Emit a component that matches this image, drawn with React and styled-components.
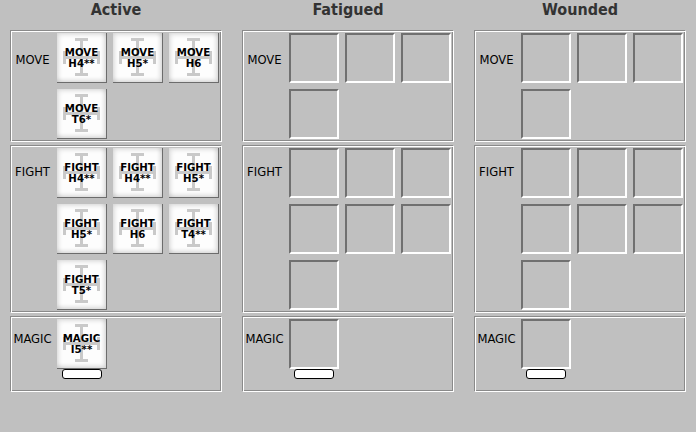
import React from "react";
import styled, { createGlobalStyle } from "styled-components";

const Global = createGlobalStyle`
  html, body { margin: 0; padding: 0; background: #c0c0c0; }
  body { width: 696px; height: 432px; overflow: hidden; font-family: "DejaVu Sans", "Liberation Sans", sans-serif; }
`;

const Board = styled.div`
  display: grid;
  grid-template-columns: repeat(3, 212px);
  column-gap: 20px;
  padding-left: 10px;
  height: 432px;
  box-sizing: border-box;
  background: #c0c0c0;
`;

const Column = styled.div`
  display: flex;
  flex-direction: column;
  gap: 3px;
`;

const Title = styled.div`
  height: 30px;
  margin-bottom: -3px;
  box-sizing: border-box;
  padding-top: 1px;
  text-align: center;
  font-family: "DejaVu Sans Condensed", "DejaVu Sans", sans-serif;
  font-stretch: condensed;
  font-weight: bold;
  font-size: 16px;
  line-height: 18px;
  color: #333333;
`;

const Panel = styled.div`
  display: grid;
  grid-template-columns: 41px 162px;
  column-gap: 4px;
  align-items: start;
  padding: 2px 2px 2px 1px;
  border-top: 1px solid #8a8a8a;
  border-left: 1px solid #8a8a8a;
  border-right: 1px solid #ffffff;
  border-bottom: 1px solid #ffffff;
  box-shadow: inset 1px 1px 0 #ffffff, inset -1px -1px 0 #8a8a8a;
`;

const Label = styled.div`
  height: 50px;
  display: flex;
  align-items: center;
  justify-content: center;
  font-size: 11.6px;
  color: #000;
  white-space: nowrap;
  transform: translateY(${(p) => p.$dy || 0}px);
`;

const Slots = styled.div`
  display: grid;
  grid-template-columns: repeat(3, 50px);
  grid-auto-rows: 50px;
  gap: 6px;
`;

const Card = styled.div`
  position: relative;
  width: 50px;
  height: 50px;
  box-sizing: border-box;
  background: #fdfdfd;
  border-right: 1px solid #6c6c6c;
  border-bottom: 1px solid #6c6c6c;
  box-shadow: inset 2px 2px 4px rgba(0, 0, 0, 0.12), inset -2px -2px 4px rgba(0, 0, 0, 0.14);
  display: flex;
  flex-direction: column;
  align-items: center;
  justify-content: center;
  font-weight: bold;
  font-size: 10.2px;
  line-height: 11px;
  color: #000;
  text-align: center;
`;

const CardText = styled.span`
  position: relative;
  display: block;
`;

const Cross = styled.svg`
  position: absolute;
  left: 0;
  top: 0;
`;

const Empty = styled.div`
  width: 50px;
  height: 50px;
  box-sizing: border-box;
  border-style: solid;
  border-width: 2px;
  border-color: #707070 #ffffff #ffffff #707070;
`;

const MagicCell = styled.div`
  display: flex;
  flex-direction: column;
  align-items: center;
  width: 50px;
  padding-bottom: 10px;
`;

const Pill = styled.div`
  width: 40px;
  height: 10px;
  box-sizing: border-box;
  border: 1px solid #000;
  border-radius: 3px;
  background: #fff;
`;

function CrossIcon() {
  return (
    <Cross width="49" height="49" viewBox="0 0 49 49">
      <g fill="#c9c9c9">
        <rect x="18" y="5" width="13" height="3" />
        <rect x="23" y="5" width="3" height="38" />
        <rect x="18" y="40" width="13" height="3" />
        <rect x="7" y="23" width="35" height="3" />
        <rect x="6" y="18" width="3" height="13" />
        <rect x="40" y="18" width="3" height="13" />
      </g>
    </Cross>
  );
}

function Tile({ kind, code }) {
  return (
    <Card>
      <CrossIcon />
      <CardText>{kind}</CardText>
      <CardText>{code}</CardText>
    </Card>
  );
}

const active = {
  MOVE: ["H4**", "H5*", "H6", "T6*"],
  FIGHT: ["H4**", "H4**", "H5*", "H5*", "H6", "T4**", "T5*"],
  MAGIC: ["I5**"],
};

const counts = { MOVE: 4, FIGHT: 7, MAGIC: 1 };
const dys = { MOVE: 2, FIGHT: -1, MAGIC: -5 };

function Section({ kind, filled }) {
  const n = counts[kind];
  const items = Array.from({ length: n }, (_, i) =>
    filled ? <Tile key={i} kind={kind} code={active[kind][i]} /> : <Empty key={i} />
  );
  return (
    <Panel>
      <Label $dy={dys[kind]}>{kind}</Label>
      {kind === "MAGIC" ? (
        <MagicCell>
          {items[0]}
          <Pill />
        </MagicCell>
      ) : (
        <Slots>{items}</Slots>
      )}
    </Panel>
  );
}

function Group({ title, filled }) {
  return (
    <Column>
      <Title>{title}</Title>
      <Section kind="MOVE" filled={filled} />
      <Section kind="FIGHT" filled={filled} />
      <Section kind="MAGIC" filled={filled} />
    </Column>
  );
}

export default function App() {
  return (
    <>
      <Global />
      <Board>
        <Group title="Active" filled />
        <Group title="Fatigued" />
        <Group title="Wounded" />
      </Board>
    </>
  );
}
